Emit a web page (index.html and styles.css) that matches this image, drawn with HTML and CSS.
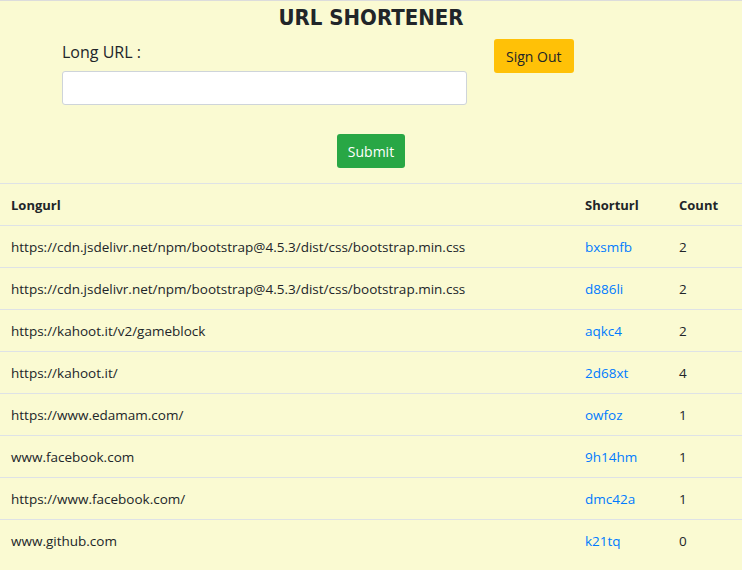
FILE: index.html
```html
<!DOCTYPE html>
<html>
<head>
<meta charset="utf-8">
<link rel="stylesheet" href="styles.css">
</head>
<body>
<div class="page">
  <h1 class="title">URL SHORTENER</h1>
  <form class="form">
    <div class="form-row">
      <div class="field">
        <label class="label">Long URL :</label>
        <input class="input" type="text">
      </div>
      <button type="button" class="btn btn-warning">Sign Out</button>
    </div>
    <div class="submit-row">
      <button type="button" class="btn btn-success">Submit</button>
    </div>
  </form>
  <table class="table">
    <thead>
      <tr><th class="c-long">Longurl</th><th class="c-short">Shorturl</th><th class="c-count">Count</th></tr>
    </thead>
    <tbody>
      <tr><td>https://cdn.jsdelivr.net/npm/bootstrap@4.5.3/dist/css/bootstrap.min.css</td><td><a href="#">bxsmfb</a></td><td>2</td></tr>
      <tr><td>https://cdn.jsdelivr.net/npm/bootstrap@4.5.3/dist/css/bootstrap.min.css</td><td><a href="#">d886li</a></td><td>2</td></tr>
      <tr><td>https://kahoot.it/v2/gameblock</td><td><a href="#">aqkc4</a></td><td>2</td></tr>
      <tr><td>https://kahoot.it/</td><td><a href="#">2d68xt</a></td><td>4</td></tr>
      <tr><td>https://www.edamam.com/</td><td><a href="#">owfoz</a></td><td>1</td></tr>
      <tr><td>www.facebook.com</td><td><a href="#">9h14hm</a></td><td>1</td></tr>
      <tr><td>https://www.facebook.com/</td><td><a href="#">dmc42a</a></td><td>1</td></tr>
      <tr><td>www.github.com</td><td><a href="#">k21tq</a></td><td>0</td></tr>
    </tbody>
  </table>
</div>
</body>
</html>
```
FILE: styles.css
```css
html, body {
  margin: 0;
  padding: 0;
  background: #fafad2;
}
body {
  font-family: "Open Sans", "Noto Sans", sans-serif;
  color: #212529;
  font-size: 13.5px;
}
.page {
  border-top: 1px solid #dcdcdc;
  min-height: 569px;
}
.title {
  margin: 4px 0 0;
  text-align: center;
  font-family: "DejaVu Sans", sans-serif;
  font-stretch: condensed;
  font-weight: bold;
  font-size: 22px;
  line-height: 26px;
}
.form-row {
  display: flex;
  align-items: flex-start;
  padding-left: 62px;
  gap: 27px;
  margin-top: 0;
}
.field {
  display: flex;
  flex-direction: column;
  width: 405px;
}
.label {
  font-size: 16px;
  line-height: 24px;
  margin: 9px 0 7px;
}
.input {
  box-sizing: border-box;
  height: 34px;
  width: 405px;
  border: 1px solid #ced4da;
  border-radius: 3px;
  background: #fff;
  margin: 0;
}
.btn {
  font-family: "Open Sans", sans-serif;
  font-size: 14px;
  border: none;
  border-radius: 3px;
  height: 34px;
  padding: 0 11px;
  cursor: pointer;
}
.btn-warning {
  background: #ffc107;
  color: #212529;
  margin-top: 8px;
  padding: 0 12px;
}
.btn-success {
  background: #28a745;
  color: #fff;
}
.submit-row {
  display: flex;
  justify-content: center;
  margin-top: 29px;
  padding-bottom: 15px;
}
.table {
  width: 100%;
  border-collapse: collapse;
}
.table th, .table td {
  border-top: 1px solid #dee2e6;
  padding: 0 11px;
  height: 41px;
  text-align: left;
  vertical-align: middle;
}
.table th {
  font-weight: bold;
  font-size: 13px;
}
.c-short { width: 72px; }
.c-count { width: 52px; }
.table a {
  color: #007bff;
  text-decoration: none;
}
```
